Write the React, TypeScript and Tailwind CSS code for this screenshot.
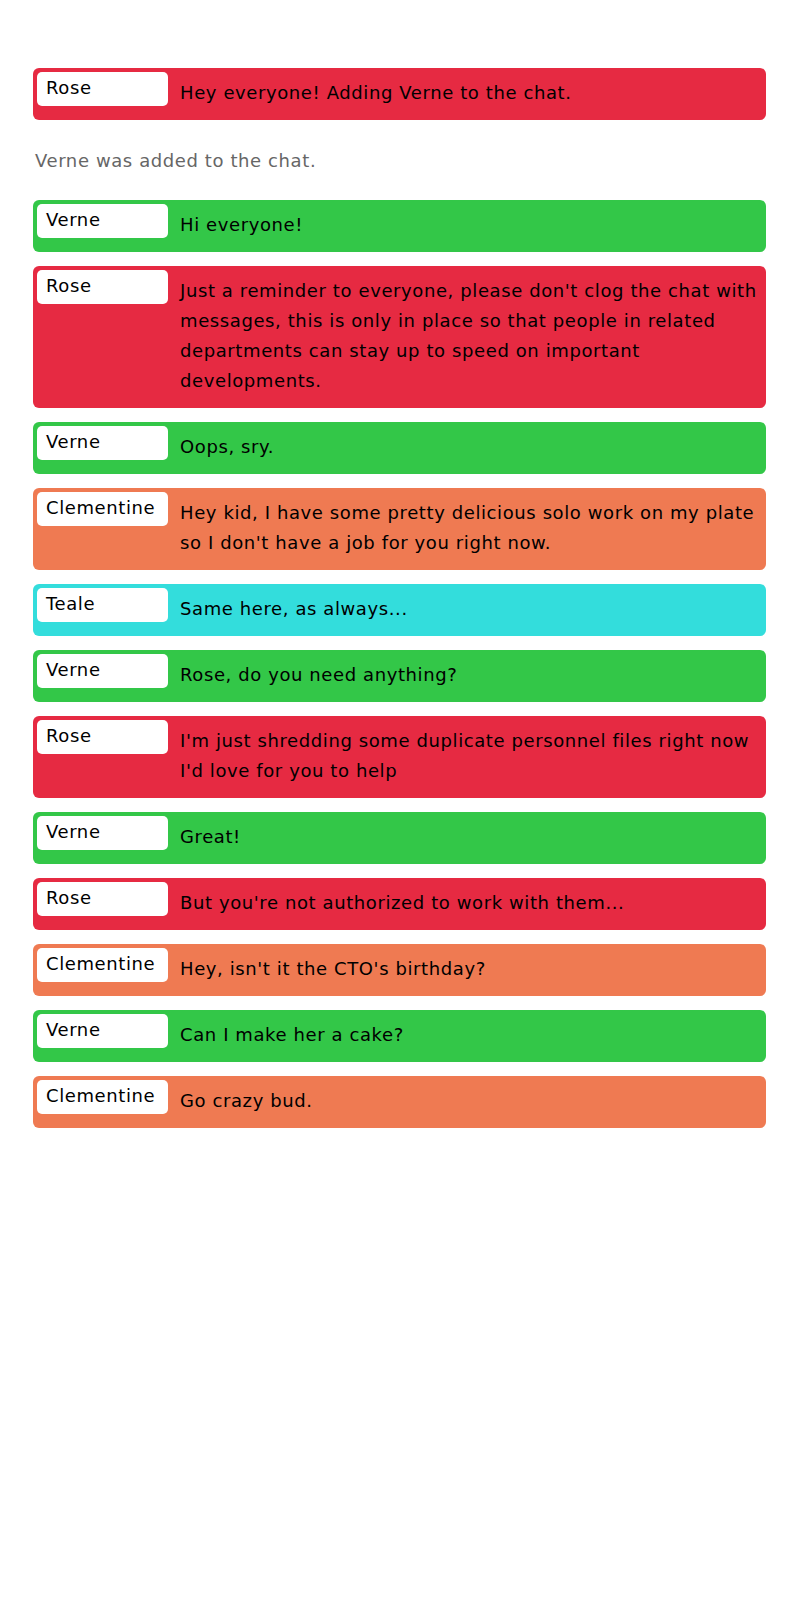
const COLORS = {
  Rose: 'bg-[#e62a42]',
  Verne: 'bg-[#33c748]',
  Clementine: 'bg-[#ef7a52]',
  Teale: 'bg-[#33dddc]',
} as const;

type Sender = keyof typeof COLORS;

type Entry =
  | { kind: 'msg'; from: Sender; text: string }
  | { kind: 'system'; text: string };

const entries: Entry[] = [
  { kind: 'msg', from: 'Rose', text: 'Hey everyone! Adding Verne to the chat.' },
  { kind: 'system', text: 'Verne was added to the chat.' },
  { kind: 'msg', from: 'Verne', text: 'Hi everyone!' },
  {
    kind: 'msg',
    from: 'Rose',
    text: "Just a reminder to everyone, please don't clog the chat with messages, this is only in place so that people in related departments can stay up to speed on important developments.",
  },
  { kind: 'msg', from: 'Verne', text: 'Oops, sry.' },
  {
    kind: 'msg',
    from: 'Clementine',
    text: "Hey kid, I have some pretty delicious solo work on my plate so I don't have a job for you right now.",
  },
  { kind: 'msg', from: 'Teale', text: 'Same here, as always...' },
  { kind: 'msg', from: 'Verne', text: 'Rose, do you need anything?' },
  {
    kind: 'msg',
    from: 'Rose',
    text: "I'm just shredding some duplicate personnel files right now I'd love for you to help",
  },
  { kind: 'msg', from: 'Verne', text: 'Great!' },
  { kind: 'msg', from: 'Rose', text: "But you're not authorized to work with them..." },
  { kind: 'msg', from: 'Clementine', text: "Hey, isn't it the CTO's birthday?" },
  { kind: 'msg', from: 'Verne', text: 'Can I make her a cake?' },
  { kind: 'msg', from: 'Clementine', text: 'Go crazy bud.' },
];

function Message({ from, text }: { from: Sender; text: string }) {
  return (
    <div className={`flex items-start rounded-[6px] p-1 ${COLORS[from]}`}>
      <div className="h-[34px] w-[131px] shrink-0 rounded-[5px] bg-white pl-[9px] pt-px leading-[30px] text-black">
        {from}
      </div>
      <p className="min-w-0 flex-1 pl-[12px] pr-1 pt-[6px] pb-[8px] leading-[30px] text-black">
        {text}
      </p>
    </div>
  );
}

export default function App() {
  return (
    <div
      className="flex min-h-[1600px] flex-col gap-[14px] bg-white pl-[33px] pr-[34px] pt-[68px] text-[18px] tracking-[0.6px]"
      style={{ fontFamily: '"DejaVu Sans", sans-serif' }}
    >
      {entries.map((e, i) =>
        e.kind === 'system' ? (
          <p key={i} className="pl-[2px] pt-[12px] pb-[10px] leading-[30px] text-[#666666]">
            {e.text}
          </p>
        ) : (
          <Message key={i} from={e.from} text={e.text} />
        ),
      )}
    </div>
  );
}
